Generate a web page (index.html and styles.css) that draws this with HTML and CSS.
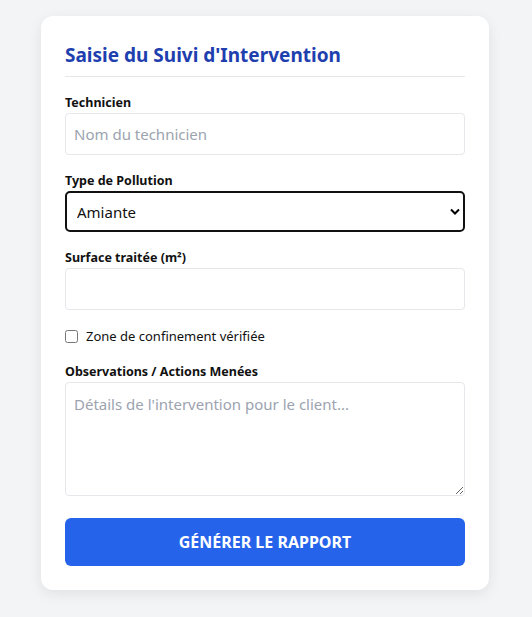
FILE: index.html
```html
<!DOCTYPE html>
<html lang="fr">
<head>
<meta charset="utf-8">
<title>Saisie du Suivi d'Intervention</title>
<link rel="stylesheet" href="styles.css">
</head>
<body>
<main class="card">
  <h2 class="title">Saisie du Suivi d'Intervention</h2>
  <form class="form">
    <div class="group">
      <label class="label" for="tech">Technicien</label>
      <input class="field" id="tech" type="text" placeholder="Nom du technicien">
    </div>
    <div class="group">
      <label class="label" for="type">Type de Pollution</label>
      <select class="field select" id="type">
        <option>Amiante</option>
        <option>Plomb</option>
      </select>
    </div>
    <div class="group">
      <label class="label" for="surf">Surface traitée (m²)</label>
      <input class="field" id="surf" type="number">
    </div>
    <div class="check-row">
      <input class="check" id="zone" type="checkbox">
      <label class="check-label" for="zone">Zone de confinement vérifiée</label>
    </div>
    <div class="group">
      <label class="label" for="obs">Observations / Actions Menées</label>
      <textarea class="field area" id="obs" placeholder="Détails de l'intervention pour le client..."></textarea>
    </div>
    <button class="btn" type="button">GÉNÉRER LE RAPPORT</button>
  </form>
</main>
</body>
</html>
```
FILE: styles.css
```css
* { box-sizing: border-box; }
html, body { margin: 0; }
body {
  background: #f3f4f6;
  font-family: "Noto Sans", "Open Sans", sans-serif;
  color: #111;
  padding: 16px 0;
}
.card {
  width: 448px;
  margin: 0 auto 0 41px;
  background: #fff;
  border-radius: 12px;
  padding: 24px;
  box-shadow: 0 4px 14px rgba(0,0,0,0.08);
}
.title {
  margin: 0;
  font-size: 19px;
  line-height: 30px;
  font-weight: 700;
  color: #1e40af;
  padding-bottom: 6px;
  border-bottom: 1px solid #e5e7eb;
}
.form {
  margin-top: 18px;
  display: flex;
  flex-direction: column;
}
.group {
  display: flex;
  flex-direction: column;
  margin-bottom: 18px;
}
.label {
  font-size: 12.5px;
  font-weight: 700;
  line-height: 16px;
  margin-bottom: 2px;
}
.field {
  width: 100%;
  height: 42px;
  border: 1px solid #e5e7eb;
  border-radius: 4px;
  padding: 0 8px;
  font-family: inherit;
  font-size: 15px;
  color: #111;
  background: #fff;
}
.field::placeholder { color: #9ca3af; }
.select {
  appearance: none;
  -webkit-appearance: none;
  border: 2px solid #111;
  border-radius: 5px;
  padding: 0 10px;
  height: 41px;
  background-image: url("data:image/svg+xml,%3Csvg xmlns='http://www.w3.org/2000/svg' width='10' height='7' viewBox='0 0 10 7'%3E%3Cpath d='M1 1.5 L5 5.5 L9 1.5' fill='none' stroke='%23000' stroke-width='2'/%3E%3C/svg%3E");
  background-repeat: no-repeat;
  background-position: right 3px center;
  outline: none;
}
.area {
  height: 114px;
  padding: 10px 8px;
  resize: vertical;
  line-height: 22px;
}
.check-row {
  display: flex;
  align-items: center;
  height: 16px;
  margin-bottom: 20px;
}
.check {
  width: 13px;
  height: 13px;
  margin: 0 8px 0 0;
}
.check-label {
  font-size: 13px;
}
.btn {
  margin-top: 4px;
  height: 48px;
  border: none;
  border-radius: 6px;
  background: #2563eb;
  color: #fff;
  font-family: inherit;
  font-size: 16px;
  font-weight: 700;
}
```
